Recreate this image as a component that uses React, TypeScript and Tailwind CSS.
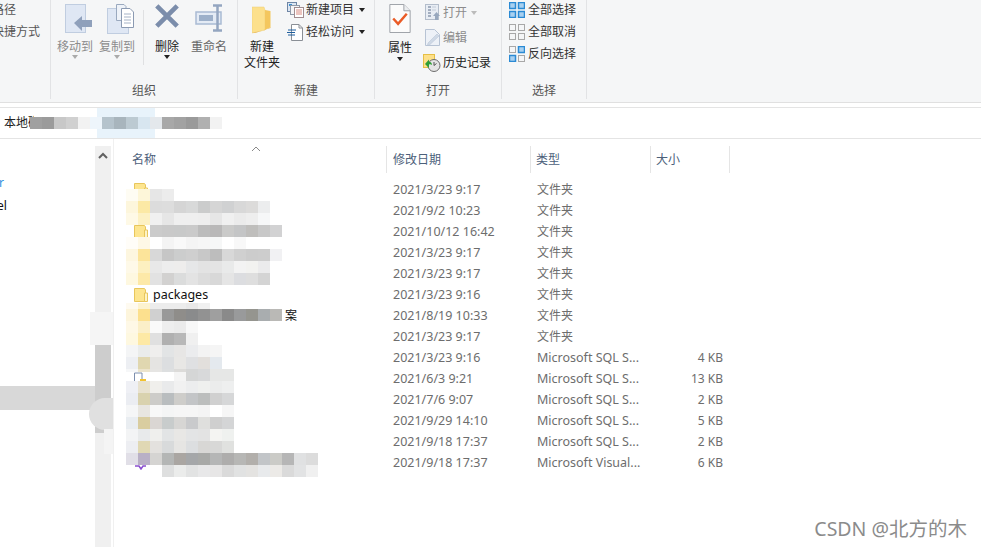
import React from 'react';

type Row = { date: string; type: string; size?: string };

const ROWS: Row[] = [
  { date: '2021/3/23 9:17', type: '文件夹' },
  { date: '2021/9/2 10:23', type: '文件夹' },
  { date: '2021/10/12 16:42', type: '文件夹' },
  { date: '2021/3/23 9:17', type: '文件夹' },
  { date: '2021/3/23 9:17', type: '文件夹' },
  { date: '2021/3/23 9:16', type: '文件夹' },
  { date: '2021/8/19 10:33', type: '文件夹' },
  { date: '2021/3/23 9:17', type: '文件夹' },
  { date: '2021/3/23 9:16', type: 'Microsoft SQL S...', size: '4 KB' },
  { date: '2021/6/3 9:21', type: 'Microsoft SQL S...', size: '13 KB' },
  { date: '2021/7/6 9:07', type: 'Microsoft SQL S...', size: '2 KB' },
  { date: '2021/9/29 14:10', type: 'Microsoft SQL S...', size: '5 KB' },
  { date: '2021/9/18 17:37', type: 'Microsoft SQL S...', size: '2 KB' },
  { date: '2021/9/18 17:37', type: 'Microsoft Visual...', size: '6 KB' },
];

// pixelated names, one strip per row; '' lets what is underneath show through
const MOSAIC: { h: number; cells: string[] }[] = [
  { h: 12, cells: ['#fefcf3', '#fdf6d9', '#e6e6e6', '#ececec'] },
  { h: 12, cells: ['#fdf6dc', '#fce9a5', '#dcdcdc', '#dddddd', '#d5d5d5', '#d8d9d9', '#cbcccc', '#d5d5d5', '#d0d1d2', '#d8d8d8', '#dcdbda', '#ecedee'] },
  { h: 12, cells: ['#fef9e6', '#fdf1c4', '#f0f0f0', '#e6e6e6', '#efefef', '#efefef', '#eeeeee', '#e6e6e6', '#f0f0f0', '#ebebeb', '#eeeeee', '#f6f7f8'] },
  { h: 12, cells: ['', '', '#cbcbcb', '#c9c9c9', '#c8c9c9', '#cacaca', '#bcbcbc', '#b9b8b8', '#cacac9', '#c4c5c6', '#bfbebc', '#c8c8c8', '#d2d2d3'] },
  { h: 12, cells: ['#fffdf8', '#fef8e6', '#ffffff', '#f4f4f4', '#f9f9f9', '#f4f4f4', '#f6f6f6', '#f6f7f7', '#ffffff', '#f8f8f8'] },
  { h: 12, cells: ['#fdf6df', '#fce49a', '#d8d8d8', '#c6c6c6', '#cccdcd', '#cfcfcf', '#c8c8c8', '#bdbdbd', '#d8d8d8', '#d0d0d0', '#cccccc', '#cdcdcd', '#f1f1f3'] },
  { h: 12, cells: ['#fef9e8', '#fdf0c0', '#e8e8e8', '#ededed', '#eeedec', '#e6e7e8', '#e3e3e3', '#e4e4e4', '#e9eaea', '#f3f3f3', '#f2f2f0', '#ebebec'] },
  { h: 12, cells: ['#fef8e0', '#fde9a8', '#e2e2e2', '#d2d1d0', '#dbdcdc', '#e3e3e3', '#dcdcdc', '#d8d8d8', '#e5e5e5', '#dcdde0', '#dedede', '#d4d4d4'] },
  { h: 18, cells: [] },
  { h: 6, cells: ['#fefaf0', '#fdf3d0', '#ececec', '#ececec', '#ececec', '#e8e8e8', '#f0f0f0'] },
  { h: 12, cells: ['#fdf5dc', '#fce08e', '#d0d0d0', '#999999', '#8f8d8a', '#8a8b8c', '#929292', '#9f9f9f', '#8a8a8a', '#999a9b', '#95958f', '#a9adaf', '#bab9b6'] },
  { h: 12, cells: ['#fef8e6', '#fbefc8', '#fafafa', '#eeeeee', '#ebebeb', '#f8f8f8'] },
  { h: 12, cells: ['#fef8e0', '#fde9a5', '#e0e0e0', '#b0b0b0', '#b8b8b8', '#f0f0f0'] },
  { h: 12, cells: ['#f4f5f6', '#eaeceb', '#efeeed', '#e2e4e5', '#e7e6e5', '#ebecee', '#f3f3f3', '#f5f5f5'] },
  { h: 12, cells: ['#edeff3', '#e0d7b0', '#e5e4e2', '#dcdee0', '#e8e7e5', '#dfe0e2', '#e2dfdc', '#e4e9ee'] },
  { h: 3, cells: ['#f6f7f8', '#ece4cc', '#e6e5e3', '#dddfe0', '#dcdbd9', '#d5d6d6', '#d8d9da', '#e6e7e6', '#e6e7e6'] },
  { h: 9, cells: ['', '', '', '', '#f4f4f4', '#d5d6d6', '#d8d9da', '#e6e7e6', '#e6e7e6'] },
  { h: 12, cells: ['#eff0f5', '#e8e2d0', '#f0efec', '#e9eaeb', '#f1f1f1', '#ecedee', '#eff0ee', '#ebecec', '#eeefef'] },
  { h: 12, cells: ['#ebedf2', '#d9d2ae', '#cdccc9', '#b9bdbf', '#cecdca', '#c3c5c7', '#bcbebd', '#d0d0d0', '#d6d7d8'] },
  { h: 12, cells: ['#f5f6f7', '#e8e6e1', '#f8f8f8', '#f4f5f5', '#f6f6f6', '#f6f6f6', '#f4f4f4', '#ffffff', '#f6f6f6'] },
  { h: 12, cells: ['#e9edf1', '#d9cda0', '#dad6d3', '#c8cccc', '#d7d6d4', '#c9cacc', '#dfdfdd', '#cfcfcf', '#d4d5d6'] },
  { h: 12, cells: ['#f3f4f5', '#e8eaeb', '#efefed', '#e2e4e5', '#e8e7e5', '#e3e4e5', '#e3e3e3', '#f4f4f2', '#eff1ef'] },
  { h: 12, cells: ['#edeef2', '#e0d8b4', '#e3e1de', '#d8dadb', '#e6e5e3', '#dcdee0', '#d8d7d5', '#d8d8d7', '#e0e1df'] },
  { h: 12, cells: ['#e1dfe7', '#b9b0c6', '#d5d4d2', '#b4b6b5', '#aaa6a2', '#a5a7a9', '#a8a9a7', '#b5b6b6', '#aeadac', '#b7b7b5', '#b2afab', '#c2c5c8', '#cbcbc7', '#b6b6b6', '#e0e1e2', '#dcdcdc'] },
  { h: 12, cells: ['', '', '', '#dedfdf', '#ebeceb', '#e2e3e3', '#e8e8e9', '#e7e6e6', '#dadada', '#e1e2e2', '#e4e3e1', '#e8eaec', '#eceae7', '#dadada', '#e2e3e4', '#f0f0f0'] },
];

const ADDRESS_MOSAIC = ['#a0a0a0', '#9b9b9b', '#c8c8c8', '#d0d0d0', '#f2f2f2', '#eef5fb', '#b5c3cc', '#a8b5bd', '#bccad2', '#d8e6f0', '#e4e8ec', '#a8a8a8', '#a2a2a2', '#9a9a9a', '#b0b0b0', '#f2f2f2'];

const Caret = ({ className = 'border-t-[#222]' }: { className?: string }) => (
  <span className={`inline-block w-0 h-0 border-x-[3.5px] border-x-transparent border-t-[4px] ${className}`} />
);

const FolderIcon = () => (
  <svg width="14" height="14" viewBox="0 0 14 14" className="shrink-0">
    <path d="M0.5 0.5H10.5L11.5 2V13.5H0.5Z" fill="#fde58f" stroke="#e8c65c" />
    <path d="M10.5 5V13.5H13.5V5Z" fill="#fdf3c6" stroke="#e8c65c" />
  </svg>
);

const MoveIcon = () => (
  <svg width="28" height="30" viewBox="0 0 28 30" className="ml-[8px]">
    <rect x="0.5" y="0.5" width="20" height="28" fill="#dfe7f4" stroke="#c0cde0" />
    <path d="M9 19L17 12V16H27V23H17V27Z" fill="#8fa0bb" />
  </svg>
);

const CopyIcon = () => (
  <svg width="28" height="30" viewBox="0 0 28 30" className="ml-[8px]">
    <rect x="0.5" y="4.5" width="21" height="25" fill="#dfe7f4" stroke="#c0cde0" />
    <path d="M9.5 0.5H17L19 2.5V16.5H9.5Z" fill="#eef2f8" stroke="#9aa9bf" />
    <path d="M14.5 4.5H23L26.5 8V23.5H14.5Z" fill="#ffffff" stroke="#8b9ab2" />
    <path d="M17 10H24M17 13H24M17 16H24M17 19H24" stroke="#a5b2c6" />
  </svg>
);

const DeleteIcon = () => (
  <svg width="26" height="26" viewBox="0 0 28 28" className="mb-[5px]">
    <path d="M3 3L25 25M25 3L3 25" stroke="#7b8dab" strokeWidth="5" />
  </svg>
);

const RenameIcon = () => (
  <svg width="30" height="28" viewBox="0 0 30 28" className="mb-[2px] ml-[2px]">
    <rect x="1" y="8" width="25" height="12" fill="#e4ebf5" stroke="#a9bbd3" strokeWidth="1.5" />
    <rect x="4" y="11" width="14" height="6" fill="#9db0ca" />
    <path d="M18 1.5H27M18 26.5H27M22.5 2V26" stroke="#94a6c1" strokeWidth="2.5" fill="none" />
  </svg>
);

const NewFolderIcon = () => (
  <svg width="20" height="28" viewBox="0 0 20 28">
    <path d="M0 1H12L13 4V24L0 27Z" fill="#fce08c" stroke="#efcf76" strokeWidth="0.5" />
    <path d="M13 4L18.5 5V21L13 24Z" fill="#f4c75e" />
    <path d="M0 27L13 24L18.5 21V22L3 27Z" fill="#e8b64e" />
  </svg>
);

const NewItemIcon = () => (
  <svg width="17" height="16" viewBox="0 0 17 16">
    <rect x="0.5" y="0.5" width="9" height="9" fill="#dce6f2" stroke="#6f86a5" />
    <rect x="2" y="2" width="3" height="2" fill="#3d8fd0" />
    <rect x="3.5" y="3.5" width="9" height="9" fill="#f4f4f6" stroke="#909aa8" />
    <rect x="7.5" y="5.5" width="9" height="10" fill="#ffffff" stroke="#a08c90" />
    <path d="M9 8H15M9 10H15M9 12H15" stroke="#d88a80" />
  </svg>
);

const EasyAccessIcon = () => (
  <svg width="17" height="17" viewBox="0 0 17 17">
    <path d="M4.5 0.5H12L15.5 4V16.5H4.5Z" fill="#ffffff" stroke="#8a8f96" />
    <path d="M12 0.5V4H15.5" fill="none" stroke="#8a8f96" />
    <path d="M1 6H9M0 8.5H8M1 11H8" stroke="#1f5f9e" />
  </svg>
);

const PropertiesIcon = () => (
  <svg width="22" height="29" viewBox="0 0 22 30" className="mb-[1px]">
    <path d="M0.5 0.5H15L21.5 7V29.5H0.5Z" fill="#fbfbfb" stroke="#9ca0a6" />
    <path d="M15 0.5V7H21.5" fill="#eceef0" stroke="#9ca0a6" />
    <path d="M4 15L9 20.5L18 10" fill="none" stroke="#ea5b26" strokeWidth="2.5" />
  </svg>
);

const OpenIcon = () => (
  <svg width="16" height="17" viewBox="0 0 16 17">
    <rect x="0.5" y="0.5" width="13" height="15" fill="#e8edf4" stroke="#b3bdcb" />
    <path d="M3 3H6M3 6H6M3 9H6M3 12H6" stroke="#8c99ad" strokeWidth="1.5" />
    <path d="M7 3H11M7 6H11" stroke="#c3ccd8" />
    <path d="M8 12L11.5 8L15 12H13V16H10V12Z" fill="#98a8be" />
  </svg>
);

const EditIcon = () => (
  <svg width="16" height="17" viewBox="0 0 16 17">
    <path d="M0.5 0.5H9.5L14.5 5.5V16.5H0.5Z" fill="#edf1f7" stroke="#b7c3d4" />
    <path d="M3 14L12 5L14 7L5 15.5L2.5 16Z" fill="#cfd9e6" stroke="#b4c1d3" strokeWidth="0.5" />
  </svg>
);

const HistoryIcon = () => (
  <svg width="18" height="18" viewBox="0 0 18 18" className="-ml-[2px] shrink-0">
    <rect x="0.5" y="0.5" width="11" height="13" fill="#fde08a" stroke="#e6bf45" />
    <circle cx="11" cy="11.5" r="6" fill="#e4e4e4" stroke="#6c6c6c" />
    <path d="M11 8V11.5L13.5 9.5" fill="none" stroke="#555" />
    <path d="M2 10L6 5.5V8C8 7.5 9 9 9 11C8 10 7 10 6 10.5V14Z" fill="#2f9e36" />
  </svg>
);

const SelectIcon = ({ active }: { active: boolean[] }) => (
  <svg width="16" height="16" viewBox="0 0 16 16">
    {[[0, 0], [9, 0], [0, 9], [9, 9]].map(([x, y], i) => (
      <rect
        key={i}
        x={x + 0.5}
        y={y + 0.5}
        width="6"
        height="6"
        fill={active[i] ? '#a8d0f0' : '#f5f6f7'}
        stroke={active[i] ? '#2a8ad4' : '#a8a8a8'}
        strokeWidth={active[i] ? 1.5 : 1}
      />
    ))}
  </svg>
);

const BigButton = ({ icon, label, tone = 'text-[#444]', caret }: { icon: React.ReactNode; label: React.ReactNode; tone?: string; caret?: React.ReactNode }) => (
  <div className={`w-[42px] flex flex-col items-center text-xs leading-4 ${tone}`}>
    <div className="h-[36px] flex items-end justify-center pb-[2px]">{icon}</div>
    <div className="mt-[3px] whitespace-nowrap">{label}</div>
    {caret && <div className="h-[6px] flex items-center -mt-[1px]">{caret}</div>}
  </div>
);

const Group = ({ width, label, children }: { width: string; label: string; children: React.ReactNode }) => (
  <div className={`${width} h-[99px] shrink-0 border-r border-[#e2e3e5] flex flex-col`}>
    <div className="h-[83px] flex overflow-hidden">{children}</div>
    <div className="h-[16px] text-center text-xs leading-4 text-[#555]">{label}</div>
  </div>
);

const SmallRow = ({ icon, children, h, iconW, tone = 'text-[#333]' }: { icon: React.ReactNode; children: React.ReactNode; h: string; iconW: string; tone?: string }) => (
  <div className={`${h} flex items-center text-xs ${tone} whitespace-nowrap`}>
    <div className={`${iconW} shrink-0 flex items-center`}>{icon}</div>
    {children}
  </div>
);

const Ribbon = () => (
  <div className="h-[102px] bg-[#f5f6f7] flex">
    <div className="w-[51px] h-[99px] shrink-0 border-r border-[#e2e3e5] text-xs text-[#555] flex flex-col items-end pr-[10px] whitespace-nowrap overflow-hidden">
      <div className="h-[20px] leading-[20px] mr-[24px]">路径</div>
      <div className="h-[22px] leading-[24px]">快捷方式</div>
    </div>

    <Group width="w-[187px]" label="组织">
      <div className="pl-[3px] flex">
        <BigButton icon={<MoveIcon />} label="移动到" tone="text-[#8c8c8c]" caret={<Caret className="border-t-[#aaa]" />} />
        <BigButton icon={<CopyIcon />} label="复制到" tone="text-[#8c8c8c]" caret={<Caret className="border-t-[#aaa]" />} />
        <div className="w-px h-[55px] mt-[10px] ml-[5px] mr-[2px] bg-[#dfe0e2]" />
        <BigButton icon={<DeleteIcon />} label="删除" tone="text-[#222]" caret={<Caret />} />
        <BigButton icon={<RenameIcon />} label="重命名" tone="text-[#666]" />
      </div>
    </Group>

    <Group width="w-[137px]" label="新建">
      <div className="w-[49px] pr-[1px] flex flex-col items-center text-xs leading-4 text-[#222]">
        <div className="h-[36px] flex items-end pb-[2px] -ml-[1px]"><NewFolderIcon /></div>
        <div className="mt-[3px]">新建</div>
        <div>文件夹</div>
      </div>
      <div className="-mt-[1px]">
        <SmallRow h="h-[22px]" iconW="w-[19px]" icon={<NewItemIcon />}>
          新建项目<span className="ml-[5px] flex"><Caret /></span>
        </SmallRow>
        <SmallRow h="h-[22px]" iconW="w-[19px]" icon={<EasyAccessIcon />}>
          轻松访问<span className="ml-[5px] flex"><Caret /></span>
        </SmallRow>
      </div>
    </Group>

    <Group width="w-[127px]" label="打开">
      <div className="w-[50px] flex flex-col items-center text-xs leading-4 text-[#222]">
        <div className="h-[37px] flex items-end pb-[3px]"><PropertiesIcon /></div>
        <div className="mt-[3px]">属性</div>
        <div className="h-[6px] flex items-center"><Caret /></div>
      </div>
      <div>
        <SmallRow h="h-[25px]" iconW="w-[18px]" icon={<OpenIcon />} tone="text-[#8c8c8c]">
          打开<span className="ml-[4px] flex"><Caret className="border-t-[#bbb]" /></span>
        </SmallRow>
        <SmallRow h="h-[25px]" iconW="w-[18px]" icon={<EditIcon />} tone="text-[#8c8c8c]">
          编辑
        </SmallRow>
        <SmallRow h="h-[25px]" iconW="w-[18px]" icon={<HistoryIcon />} tone="text-[#222]">
          历史记录
        </SmallRow>
      </div>
    </Group>

    <Group width="w-[85px]" label="选择">
      <div className="pl-[7px] -mt-[1px]">
        <SmallRow h="h-[22px]" iconW="w-[19px]" icon={<SelectIcon active={[true, true, true, true]} />}>全部选择</SmallRow>
        <SmallRow h="h-[22px]" iconW="w-[19px]" icon={<SelectIcon active={[false, false, false, false]} />}>全部取消</SmallRow>
        <SmallRow h="h-[22px]" iconW="w-[19px]" icon={<SelectIcon active={[false, true, true, false]} />}>反向选择</SmallRow>
      </div>
    </Group>
  </div>
);

const AddressBar = () => (
  <div className="h-[32px] mt-[4px] border-y border-[#e4e4e4] bg-white relative overflow-hidden flex items-center pl-[4px] text-xs text-[#222]">
    本地磁盘
    {/* blurred breadcrumb */}
    <div className="absolute left-[34px] top-0 w-[226px] h-[30px] bg-white" />
    <div className="absolute left-[97px] top-0 w-[58px] h-[30px] bg-[#e8f3fb]" />
    <div className="absolute left-[30px] top-[9px] flex">
      {ADDRESS_MOSAIC.map((c, i) => (
        <div key={i} className="w-[12px] h-[12px]" style={{ backgroundColor: c }} />
      ))}
    </div>
  </div>
);

const NavPane = () => (
  <div className="w-[113px] shrink-0 relative flex text-xs">
    <div className="w-[95px] shrink-0 overflow-hidden pt-[32px]">
      <div className="h-[23px] leading-[23px] text-[#2f8fe0] -ml-[1px]">r</div>
      <div className="h-[23px] leading-[23px] text-[#111] -ml-[3px]">el</div>
      <div className="mt-[169px] h-[24px] bg-[#d8d8d8]" />
    </div>
    <div className="w-[16px] shrink-0 mt-[7px] bg-[#f0f0f0] flex flex-col items-center">
      <svg width="10" height="7" viewBox="0 0 10 7" className="mt-[6px]">
        <path d="M1 6L5 2L9 6" fill="none" stroke="#606060" strokeWidth="2" />
      </svg>
      <div className="w-full h-[89px] mt-[185px] bg-[#cdcdcd]" />
    </div>
    <div className="w-[2px] shrink-0 bg-white" />
    {/* blur smudges laid over the scroll bar */}
    <div className="absolute left-[90px] top-[173px] w-[24px] h-[33px] bg-[#f5f5f5]" />
    <div className="absolute left-[89px] top-[259px] w-[25px] h-[32px] bg-[#e0e0e0] rounded-l-full rounded-r-md" />
    <div className="absolute left-[104px] top-[290px] w-[9px] h-[25px] bg-[#f4f4f4]" />
  </div>
);

const FileList = () => (
  <div className="flex-1 relative border-l border-[#f0f0f0] text-xs">
    <div className="mt-[7px] h-[27px] flex items-center text-[#4c607a] relative">
      <div className="w-[272px] pl-[18px]">名称</div>
      <svg width="10" height="6" viewBox="0 0 10 6" className="absolute left-[137px] top-0">
        <path d="M1 5L5 1L9 5" fill="none" stroke="#8a8a8a" />
      </svg>
      <div className="w-[144px] h-full border-l border-[#e5e5e5] pl-[6px] leading-[27px]">修改日期</div>
      <div className="w-[120px] h-full border-l border-[#e5e5e5] pl-[5px] leading-[27px]">类型</div>
      <div className="w-[80px] h-full border-x border-[#e5e5e5] pl-[5px] leading-[27px]">大小</div>
    </div>
    <div className="mt-[6px]">
      {ROWS.map((r, i) => (
        <div key={i} className="h-[21px] flex items-center text-[#6d6d6d]">
          <div className="w-[272px] pl-[20px] flex items-center text-[#111] text-[12.5px]">
            {i < 8 && <FolderIcon />}
            {i === 5 && <span className="ml-[5px] mt-[2px]">packages</span>}
            {i === 6 && <span className="ml-[137px] text-xs">案</span>}
            {i === 9 && (
              <svg width="14" height="14" viewBox="0 0 14 14">
                <path d="M0.5 1H8V10H0.5Z" fill="#ffffff" stroke="#7d8fae" />
                <rect x="6" y="7" width="6" height="4" fill="#f2c230" />
              </svg>
            )}
            {i === 13 && (
              <svg width="14" height="14" viewBox="0 0 14 14">
                <path d="M1 10H5L7 13L9 10H12" fill="none" stroke="#8a4fd0" strokeWidth="1.5" />
              </svg>
            )}
          </div>
          <div className="w-[144px] pl-[7px] mt-[2px] text-[12.5px]">{r.date}</div>
          <div className={r.size ? 'w-[120px] pl-[7px] mt-[2px] whitespace-nowrap text-[12.5px]' : 'w-[120px] pl-[7px] whitespace-nowrap'}>{r.type}</div>
          <div className="w-[73px] text-right">{r.size}</div>
        </div>
      ))}
    </div>
    {/* pixelated file names */}
    <div className="absolute left-[12px] top-[50px]">
      {MOSAIC.map((row, i) => (
        <div key={i} className="flex" style={{ height: row.h }}>
          {row.cells.map((c, j) => (
            <div key={j} className="w-[12px]" style={{ backgroundColor: c || 'transparent' }} />
          ))}
        </div>
      ))}
    </div>
  </div>
);

export default function App() {
  return (
    <div className="w-[981px] h-[547px] overflow-hidden relative bg-white flex flex-col [font-family:'Noto_Sans','Noto_Sans_CJK_SC',sans-serif]">
      <Ribbon />
      <div className="h-px bg-[#e0e0e0]" />
      <AddressBar />
      <div className="flex-1 flex">
        <NavPane />
        <FileList />
      </div>
      <div className="absolute right-[14px] bottom-[6px] text-[19.5px] leading-6 text-[#8b8b8b] whitespace-nowrap">CSDN @北方的木</div>
    </div>
  );
}
